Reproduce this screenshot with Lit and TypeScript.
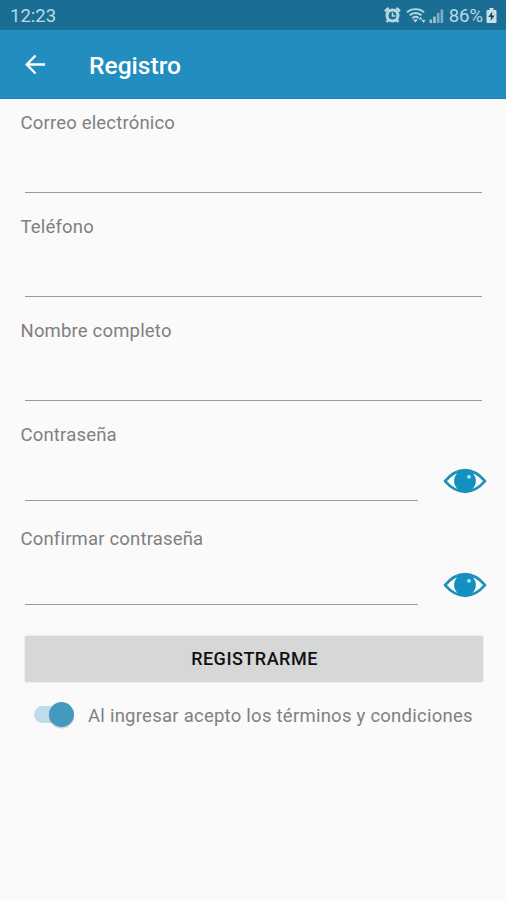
import { LitElement, html, css } from "lit";
import { customElement, property } from "lit/decorators.js";

@customElement("eye-icon")
class EyeIcon extends LitElement {
  static styles = css`
    :host { display: block; width: 44px; height: 28px; }
    svg { display: block; }
  `;
  render() {
    return html`<svg width="44" height="28" viewBox="0 0 44 28">
      <path d="M2 14.200C8.500 6.500 14.500 3.200 22 3.200S35.500 6.500 42 14.200C35.500 21.600 29.500 24.800 22 24.800S8.500 21.600 2 14.200Z" fill="#fcfdfd" stroke="#2090b6" stroke-width="2.700" stroke-linejoin="round"/>
      <circle cx="22" cy="14" r="10.900" fill="#138fc0"/>
      <circle cx="26" cy="9.800" r="1.900" fill="#b5e4f4"/>
    </svg>`;
  }
}

@customElement("form-field")
class FormField extends LitElement {
  @property() label = "";
  @property({ type: Boolean }) secret = false;
  static styles = css`
    :host { display: block; height: 104px; }
    .label { height: 28px; padding: 10px 0 0 20.500px; font-size: 18.500px; line-height: 28px; letter-spacing: 0.180px; color: #808080; }
    .row { display: flex; height: 56px; padding: 0 19px 0 25px; }
    .line { flex: 1; height: 55px; margin-right: 5px; border-bottom: 1.500px solid #999; }
    .secret .line { height: 51px; margin-right: 25px; }
    eye-icon { margin-top: 18px; }
  `;
  render() {
    return html`<div class="label">${this.label}</div>
      <div class="row ${this.secret ? "secret" : ""}">
        <div class="line"></div>
        ${this.secret ? html`<eye-icon></eye-icon>` : ""}
      </div>`;
  }
}

@customElement("app-root")
class AppRoot extends LitElement {
  static styles = css`
    :host { display: block; height: 900px; overflow: hidden; background: #fafafa; font-family: Roboto, sans-serif; }
    .status { display: flex; align-items: center; height: 30px; padding: 1px 9px 0 10px; box-sizing: border-box; background: #1b6e93; color: #b9d8e6; font-size: 18.500px; }
    .time { flex: 1; }
    .icons { display: block; margin-right: 3px; }
    .pct { margin-right: 3px; }
    .bar { display: flex; align-items: center; height: 69px; box-sizing: border-box; padding-left: 22px; background: #228dbf; border-bottom: 1px solid #1c82b1; color: #fff; }
    .title { margin: 3px 0 0 41px; font-size: 24.600px; font-weight: 500; }
    .button { display: flex; align-items: center; justify-content: center; height: 46px; padding: 0 0 1px 2px; box-sizing: border-box; margin: 17px 23.500px 0 24.500px; border-radius: 2px; background: #d6d8d7; box-shadow: 0 0 2px #0003; color: #111; font-size: 18px; font-weight: 500; letter-spacing: 0.500px; }
    .terms { display: flex; align-items: center; height: 30px; margin: 18px 0 0 32px; }
    .text { margin: 2px 0 0 11px; font-size: 18.500px; letter-spacing: 0.250px; color: #808080; white-space: nowrap; }
  `;
  render() {
    return html`
      <div class="status">
        <span class="time">12:23</span>
        <svg class="icons" width="62" height="20" viewBox="0 0 62 20">
          <g fill="none" stroke="#b9d8e6" stroke-width="2.600">
            <circle cx="8.500" cy="9.500" r="5.500" stroke-width="3"/>
            <path d="M1 5.200L4.600 2M16 5.200L12.400 2M4.800 13.500L2.600 16M12.200 13.500L14.400 16"/>
            <path d="M8.500 6.500V10H11.500" stroke-width="1.500"/>
          </g>
          <g fill="none" stroke="#b9d8e6" stroke-width="1.900">
            <path d="M23 6.300C27.500 2 35.500 2 40 6.300M25.600 9.300C29 6.200 34 6.200 37.400 9.300M28.200 12.300C30.400 10.400 32.600 10.400 34.500 12"/>
          </g>
          <path d="M28.800 13.500H34L31.400 16.500ZM34.600 13.600L36.600 10.800L38.600 13.600ZM37.600 14H41.600L39.600 17Z" fill="#b9d8e6"/>
          <path d="M45.500 13.500h2.600v3.500h-2.600ZM49.200 10.500h2.600v6.500h-2.600Z" fill="#9bc5d7"/>
          <path d="M52.900 7h2.600V17h-2.600ZM56.600 3.500h2.600V17h-2.600Z" fill="#79adc4"/>
        </svg>
        <span class="pct">86%</span>
        <svg width="11" height="16" viewBox="0 0 11 16">
          <path d="M3.500 0H7.500V2H9.500Q10.500 2 10.500 3V14Q10.500 15 9.500 15H1.500Q.500 15 .500 14V3Q.500 2 1.500 2H3.500Z" fill="#c9e0ea"/>
          <path d="M6.300 3.500L2.300 9H5L4.600 13L8.700 7.600H6Z" fill="#164c65"/>
        </svg>
      </div>
      <div class="bar">
        <svg width="26" height="26" viewBox="0 0 26 26" fill="none" stroke="#fff" stroke-width="2.400">
          <path d="M13.500 4.500L4.800 13.500L13.500 22.500M5 13.500H23"/>
        </svg>
        <div class="title">Registro</div>
      </div>
      <form-field label="Correo electrónico"></form-field>
      <form-field label="Teléfono"></form-field>
      <form-field label="Nombre completo"></form-field>
      <form-field label="Contraseña" secret></form-field>
      <form-field label="Confirmar contraseña" secret></form-field>
      <div class="button">REGISTRARME</div>
      <div class="terms">
        <svg width="45" height="30" viewBox="0 0 45 30">
          <rect x="2" y="6" width="36" height="17" rx="8.500" fill="#bfdde8"/>
          <circle cx="29.500" cy="15.800" r="12.800" fill="#00000028"/>
          <circle cx="29.500" cy="14.500" r="12.500" fill="#4499bf"/>
        </svg>
        <span class="text">Al ingresar acepto los términos y condiciones</span>
      </div>
    `;
  }
}
